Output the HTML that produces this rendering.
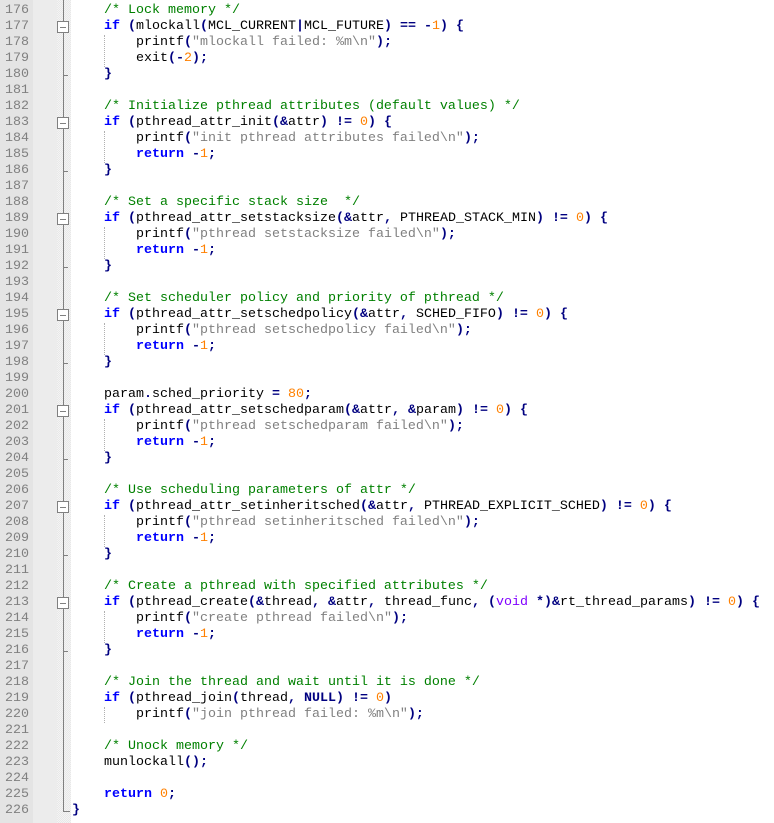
<!DOCTYPE html>
<html><head><meta charset="utf-8"><style>
body{margin:0;width:774px;height:823px;background:#fff;overflow:hidden;position:relative;font-family:"Liberation Mono",monospace;font-size:13.33px}
#ln{position:absolute;left:0;top:0;width:33px;height:823px;background:#e4e4e4}
#ln2{position:absolute;left:33px;top:0;width:24px;height:823px;background:#ececec}
#fm{position:absolute;left:57px;top:0;width:14px;height:823px;background-color:#f4f4f4;background-image:linear-gradient(45deg,#e8e8e8 25%,transparent 25%,transparent 75%,#e8e8e8 75%),linear-gradient(45deg,#e8e8e8 25%,transparent 25%,transparent 75%,#e8e8e8 75%);background-size:2px 2px;background-position:0 0,1px 1px}
#nums{position:absolute;left:0;top:3px;width:29px;text-align:right;color:#808080;white-space:pre;margin:0;font:inherit;line-height:16px}
pre#code{position:absolute;left:72px;top:3px;margin:0;font:inherit;line-height:16px;color:#000}
.k{color:#0000ff;font-weight:bold}.c{color:#008000}.s{color:#808080}.n{color:#ff8000}.o{color:#000080;font-weight:bold}.t{color:#8000ff}
.vl{position:absolute;left:63px;width:1px;background:#808080}
.box{position:absolute;left:57px;border:1px solid #808080;background:#fff;box-sizing:border-box;width:12px;height:12px}
.box:after{content:"";position:absolute;left:2px;right:2px;top:5px;height:1px;background:#808080}
.tk{position:absolute;left:63px;width:5px;height:1px;background:#808080}
.ig{position:absolute;left:104px;width:0;border-left:1px dotted #b0b0b0;height:16px}
</style></head><body>
<div id="ln"></div><div id="ln2"></div><div id="fm"></div>
<div class="vl" style="top:0;height:812px"></div>
<div class="tk" style="top:811px;width:7px"></div>
<pre id="nums">176
177
178
179
180
181
182
183
184
185
186
187
188
189
190
191
192
193
194
195
196
197
198
199
200
201
202
203
204
205
206
207
208
209
210
211
212
213
214
215
216
217
218
219
220
221
222
223
224
225
226</pre>
<div class="box" style="top:21px"></div><div class="tk" style="top:75px"></div>
<div class="box" style="top:117px"></div><div class="tk" style="top:171px"></div>
<div class="box" style="top:213px"></div><div class="tk" style="top:267px"></div>
<div class="box" style="top:309px"></div><div class="tk" style="top:363px"></div>
<div class="box" style="top:405px"></div><div class="tk" style="top:459px"></div>
<div class="box" style="top:501px"></div><div class="tk" style="top:555px"></div>
<div class="box" style="top:597px"></div><div class="tk" style="top:651px"></div>
<div class="ig" style="top:35px;height:32px"></div>
<div class="ig" style="top:131px;height:32px"></div>
<div class="ig" style="top:227px;height:32px"></div>
<div class="ig" style="top:323px;height:32px"></div>
<div class="ig" style="top:419px;height:32px"></div>
<div class="ig" style="top:515px;height:32px"></div>
<div class="ig" style="top:611px;height:32px"></div>
<div class="ig" style="top:707px;height:16px"></div>
<pre id="code">    <span class="c">/* Lock memory */</span>
    <span class="k">if</span> <span class="o">(</span>mlockall<span class="o">(</span>MCL_CURRENT<span class="o">|</span>MCL_FUTURE<span class="o">)</span> <span class="o">==</span> <span class="o">-</span><span class="n">1</span><span class="o">)</span> <span class="o">{</span>
        printf<span class="o">(</span><span class="s">"mlockall failed: %m\n"</span><span class="o">);</span>
        exit<span class="o">(-</span><span class="n">2</span><span class="o">);</span>
    <span class="o">}</span>

    <span class="c">/* Initialize pthread attributes (default values) */</span>
    <span class="k">if</span> <span class="o">(</span>pthread_attr_init<span class="o">(&amp;</span>attr<span class="o">)</span> <span class="o">!=</span> <span class="n">0</span><span class="o">)</span> <span class="o">{</span>
        printf<span class="o">(</span><span class="s">"init pthread attributes failed\n"</span><span class="o">);</span>
        <span class="k">return</span> <span class="o">-</span><span class="n">1</span><span class="o">;</span>
    <span class="o">}</span>

    <span class="c">/* Set a specific stack size  */</span>
    <span class="k">if</span> <span class="o">(</span>pthread_attr_setstacksize<span class="o">(&amp;</span>attr<span class="o">,</span> PTHREAD_STACK_MIN<span class="o">)</span> <span class="o">!=</span> <span class="n">0</span><span class="o">)</span> <span class="o">{</span>
        printf<span class="o">(</span><span class="s">"pthread setstacksize failed\n"</span><span class="o">);</span>
        <span class="k">return</span> <span class="o">-</span><span class="n">1</span><span class="o">;</span>
    <span class="o">}</span>

    <span class="c">/* Set scheduler policy and priority of pthread */</span>
    <span class="k">if</span> <span class="o">(</span>pthread_attr_setschedpolicy<span class="o">(&amp;</span>attr<span class="o">,</span> SCHED_FIFO<span class="o">)</span> <span class="o">!=</span> <span class="n">0</span><span class="o">)</span> <span class="o">{</span>
        printf<span class="o">(</span><span class="s">"pthread setschedpolicy failed\n"</span><span class="o">);</span>
        <span class="k">return</span> <span class="o">-</span><span class="n">1</span><span class="o">;</span>
    <span class="o">}</span>

    param<span class="o">.</span>sched_priority <span class="o">=</span> <span class="n">80</span><span class="o">;</span>
    <span class="k">if</span> <span class="o">(</span>pthread_attr_setschedparam<span class="o">(&amp;</span>attr<span class="o">,</span> <span class="o">&amp;</span>param<span class="o">)</span> <span class="o">!=</span> <span class="n">0</span><span class="o">)</span> <span class="o">{</span>
        printf<span class="o">(</span><span class="s">"pthread setschedparam failed\n"</span><span class="o">);</span>
        <span class="k">return</span> <span class="o">-</span><span class="n">1</span><span class="o">;</span>
    <span class="o">}</span>

    <span class="c">/* Use scheduling parameters of attr */</span>
    <span class="k">if</span> <span class="o">(</span>pthread_attr_setinheritsched<span class="o">(&amp;</span>attr<span class="o">,</span> PTHREAD_EXPLICIT_SCHED<span class="o">)</span> <span class="o">!=</span> <span class="n">0</span><span class="o">)</span> <span class="o">{</span>
        printf<span class="o">(</span><span class="s">"pthread setinheritsched failed\n"</span><span class="o">);</span>
        <span class="k">return</span> <span class="o">-</span><span class="n">1</span><span class="o">;</span>
    <span class="o">}</span>

    <span class="c">/* Create a pthread with specified attributes */</span>
    <span class="k">if</span> <span class="o">(</span>pthread_create<span class="o">(&amp;</span>thread<span class="o">,</span> <span class="o">&amp;</span>attr<span class="o">,</span> thread_func<span class="o">,</span> <span class="o">(</span><span class="t">void</span> <span class="o">*)&amp;</span>rt_thread_params<span class="o">)</span> <span class="o">!=</span> <span class="n">0</span><span class="o">)</span> <span class="o">{</span>
        printf<span class="o">(</span><span class="s">"create pthread failed\n"</span><span class="o">);</span>
        <span class="k">return</span> <span class="o">-</span><span class="n">1</span><span class="o">;</span>
    <span class="o">}</span>

    <span class="c">/* Join the thread and wait until it is done */</span>
    <span class="k">if</span> <span class="o">(</span>pthread_join<span class="o">(</span>thread<span class="o">,</span> <span class="k" style="color:#000080">NULL</span><span class="o">)</span> <span class="o">!=</span> <span class="n">0</span><span class="o">)</span>
        printf<span class="o">(</span><span class="s">"join pthread failed: %m\n"</span><span class="o">);</span>

    <span class="c">/* Unock memory */</span>
    munlockall<span class="o">();</span>

    <span class="k">return</span> <span class="n">0</span><span class="o">;</span>
<span class="o">}</span></pre>
</body></html>
